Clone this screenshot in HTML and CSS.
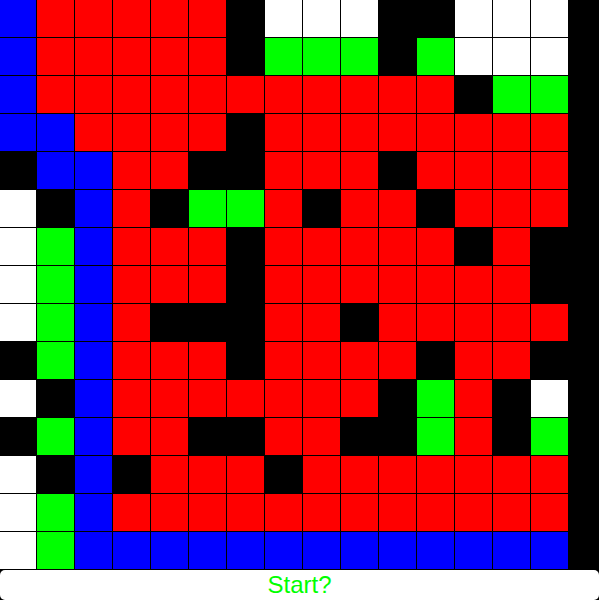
FILE: index.html
```html
<!DOCTYPE html>
<html lang="en">
<head>
  <meta charset="UTF-8">
  <meta name="viewport" content="width=device-width, initial-scale=1.0">
  <title>Grid Game</title>
  <link rel="stylesheet" href="styles.css">
</head>
<body>
  <div id="board" class="board"></div>
  <button id="start" class="start-btn">Start?</button>

  <script>
    // one letter per cell: B blue, R red, G green, W white, K black
    const map = [
      "BRRRRRKWWWKKWWW",
      "BRRRRRKGGGKGWWW",
      "BRRRRRRRRRRRKGG",
      "BBRRRRKRRRRRRRR",
      "KBBRRKKRRRKRRRR",
      "WKBRKGGRKRRKRRR",
      "WGBRRRKRRRRRKRK",
      "WGBRRRKRRRRRRRK",
      "WGBRKKKRRKRRRRR",
      "KGBRRRKRRRRKRRK",
      "WKBRRRRRRRKGRKW",
      "KGBRRKKRRKKGRKG",
      "WKBKRRRKRRRRRRR",
      "WGBRRRRRRRRRRRR",
      "WGBBBBBBBBBBBBB"
    ];
    const names = { B: "blue", R: "red", G: "green", W: "white", K: "black" };

    const board = document.getElementById("board");
    map.forEach(function (row) {
      for (const ch of row) {
        const cell = document.createElement("div");
        cell.className = "cell " + names[ch];
        board.appendChild(cell);
      }
    });
  </script>
</body>
</html>
```

FILE: styles.css
```css
html, body {
  margin: 0;
  padding: 0;
  background-color: #000;
  height: 600px;
  overflow: hidden;
}
.board {
  display: grid;
  grid-template-columns: repeat(15, 37px);
  grid-auto-rows: 37px;
  gap: 1px;
  margin-left: -1px;
  width: 569px;
}
.cell.blue {
  background-color: #0000ff;
}
.cell.red {
  background-color: #ff0000;
}
.cell.green {
  background-color: #00ff00;
}
.cell.white {
  background-color: #ffffff;
}
.cell.black {
  background-color: #000000;
}
.start-btn {
  display: block;
  width: 100%;
  height: 30px;
  margin-top: 1px;
  padding: 0;
  border: none;
  border-radius: 5px;
  background-color: #fff;
  color: #00ff00;
  font-family: "Liberation Sans", Arial, sans-serif;
  font-size: 24px;
  line-height: 28px;
  cursor: pointer;
}
```
